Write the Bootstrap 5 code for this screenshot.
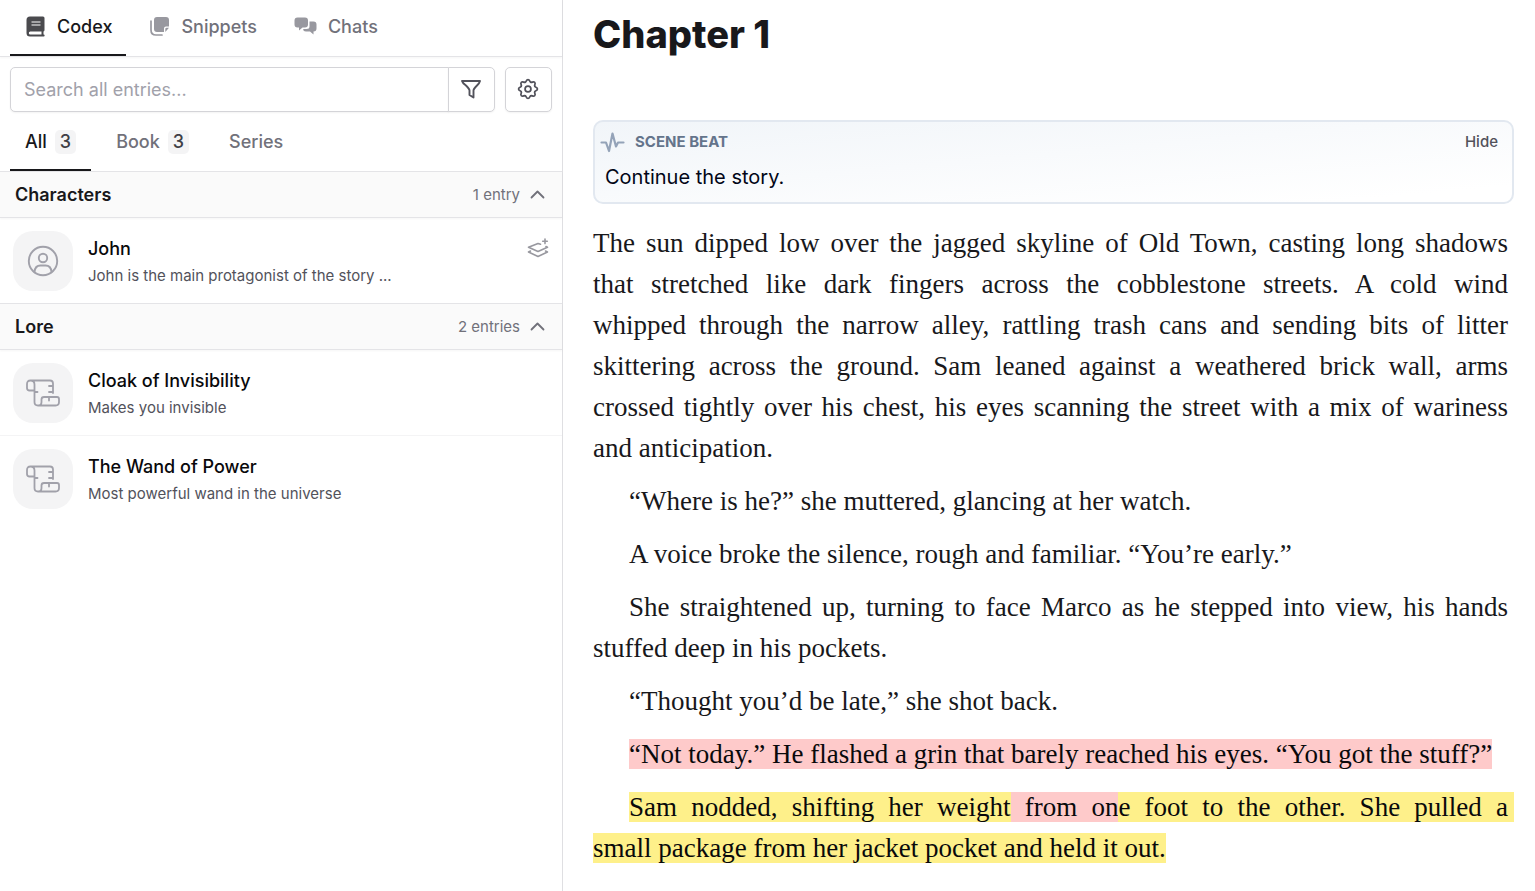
<!DOCTYPE html>
<html lang="en">
<head>
<meta charset="utf-8">
<meta name="viewport" content="width=device-width, initial-scale=1">
<title>Chapter 1</title>
<link href="https://cdn.jsdelivr.net/npm/bootstrap@5.3.0/dist/css/bootstrap.min.css" rel="stylesheet">
<style>
  body { font-family: Inter, "Liberation Sans", sans-serif; color: #18181b; }
  button { font-family: inherit; }
  svg { display: block; flex: none; }
  .line { fill: none; stroke: currentColor; stroke-linecap: round; stroke-linejoin: round; }
  .codex-pane { flex: 0 0 563px; max-width: 50vw; border-right: 1px solid #dfdfe2; }
  .tab-strip { padding: 0 10px; border-bottom: 1px solid #e4e4e7; }
  .tab-btn { border: 0; background: none; color: #71717a; font-weight: 500; font-size: 18px; line-height: 24px; border-bottom: 2px solid transparent; }
  .tab-btn.active { color: #18181b; border-bottom-color: #18181b; }
  .main-strip { height: 57px; gap: 8px; box-shadow: 0 1px 2px #0000000a; }
  .main-tab { padding: 14px 14px 15px 15px; gap: 11px; }
  .main-tab svg { color: #98989f; }
  .main-tab.active svg { color: #4a4a4e; }
  .sub-strip { height: 60px; gap: 10px; }
  .sub-tab { padding: 18px 15px 0; gap: 8px; height: 59px; align-items: flex-start; }
  .sub-tab .count { background: #f4f4f5; color: #3f3f46; border-radius: 5px; padding: 0 5px; }
  .tools { padding: 10px 10px 0; gap: 10px; }
  .tools .form-control, .tools .btn { height: 45px; border-color: #d4d4d8; box-shadow: 0 1px 2px #0000000d; }
  .tools .form-control { font-size: 18px; padding: 0 13px; border-radius: 5px; }
  .tools .form-control::placeholder { color: #a1a1aa; }
  .tools .btn { width: 47px; padding: 0 2px 2px 0; border-radius: 5px; color: #52525b; background: #fff; }
  .group-head { height: 46px; padding: 0 17px 0 15px; background: #fafafa; border-bottom: 1px solid #e4e4e7; box-shadow: 0 1px 2px #0000000a; font-size: 18px; }
  .group-head h2 { font-size: 18px; font-weight: 600; margin: 0; }
  .group-head button { border: 0; background: none; padding: 1px 0 0; font-size: 15px; color: #71717a; gap: 10px; }
  .group-head svg { margin-bottom: 2px; }
  .entry { padding: 13px; gap: 15px; border-bottom: 1px solid #f4f4f5; height: 86px; }
  .entry.final { border-color: #e4e4e7; }
  .entry.open-end { border-color: transparent; }
  .entry h3 { font-size: 18px; line-height: 26px; font-weight: 500; margin: 5px 0 2px; color: #09090b; }
  .entry p { font-size: 15px; line-height: 24px; margin: 0; color: #52525b; }
  .thumb { width: 60px; height: 60px; border-radius: 20px; background: #f4f4f5; color: #a1a1aa; }
  .stack-icon { color: #98989f; margin-top: 7px; }
  .editor { padding: 6px 21px 0 30px; min-width: 0; }
  .editor h1 { font-size: 38px; line-height: 56px; font-weight: 800; margin: 0 0 58px; color: #18181b; }
  .beat { height: 84px; border: 2px solid #e2e8f0; border-radius: 10px; padding: 8px 14px 0 5px; background: linear-gradient(to bottom right, #f1f5f9, #fff 90%); }
  .beat .beat-name { color: #64748b; font-size: 15px; font-weight: 700; margin-left: 10px; }
  .beat button { border: 0; background: none; padding: 0; font-size: 15px; font-weight: 500; color: #52525b; }
  .beat p { font-size: 20px; line-height: 28px; margin: 9px 0 0 5px; color: #020617; }
  .prose { font-family: "Liberation Serif", serif; font-size: 27px; line-height: 41px; padding-right: 6px; margin-top: 19px; text-align: justify; color: #18181b; }
  .prose p { margin: 0 0 12px; text-indent: 36px; }
  /* typeset lines: "full" runs to both margins, "tail" ends the paragraph */
  .full, .tail { display: block; text-indent: 0; }
  .full { text-align-last: justify; }
  .full.indented { text-indent: 36px; }
  .rose { background: #fecaca; color: #09090b; }
  .gold { background: #fef08a; color: #09090b; }
  .full .gold:last-child { padding-right: 6px; margin-right: -6px; }
</style>
</head>
<body>
<svg width="0" height="0" class="position-absolute" aria-hidden="true">
  <defs>
    <path id="tooth" d="M-3.060-7.390C-1.500-7.500-2.300-10.300 0-10.300S1.500-7.500 3.060-7.390"/>
    <path id="scroll" d="M8.500 11.500H3.500Q1 11.500 1 9V5q0-3.500 3.500-3.500H24q3 0 3 3V14M4.500 1.500q4 0 4 4V23q0 3.500 3.500 3.500M8.500 13h3M23 7h4M23 13h4M12 26.500q3.500 0 3.500-3.500v-2.500q0-2.500 2.500-2.500h13q2 0 2 2v3q0 3.500-3.500 3.500Zm11-8.500v3.500"/>
  </defs>
</svg>
<div class="d-flex vh-100 overflow-hidden">
  <aside class="codex-pane d-flex flex-column">
    <nav class="tab-strip main-strip d-flex">
      <button class="tab-btn main-tab active d-flex align-items-center">
        <svg width="21" height="21" viewBox="0 0 21 21"><path fill="currentColor" fill-rule="evenodd" d="M5 0.500h13q1.500 0 1.500 1.500v12q0 1-1 1.500v3h.2a.9.9 0 0 1 0 1.900H5a3.500 3.500 0 0 1-3.500-3.500V4A3.500 3.500 0 0 1 5 .5Zm.3 14.900a1.500 1.500 0 0 0 0 3h11.200v-3ZM6.500 5.400v1.200h9V5.400Zm0 3v1.200h9V8.400Z"/></svg>
        Codex</button>
      <button class="tab-btn main-tab d-flex align-items-center">
        <svg width="21" height="21" viewBox="0 0 21 21"><path fill="currentColor" d="M8 1h9q3 0 3 3v6.500h-3a2 2 0 0 0-2 2V16H8q-3 0-3-3V4q0-3 3-3Zm8.300 15v-3q0-1.200 1.200-1.200H20Z"/><path class="line" stroke-width="1.700" d="M2 5v9q0 5 5 5h6"/></svg>
        Snippets</button>
      <button class="tab-btn main-tab d-flex align-items-center">
        <svg width="23" height="21" viewBox="0 0 23 21"><path fill="currentColor" d="M3.500 1.500H11q3 0 3 3v4q0 3-3 3H8.500L5 14.500v-3H3.500q-3 0-3-3v-4q0-3 3-3Zm12 4H19.500q3 0 3 3v4q0 3-3 3V18.500l-3.500-3h-4q-2.800 0-2.800-2.500H12.500q3 0 3-2.500Z"/></svg>
        Chats</button>
    </nav>
    <div class="tools d-flex">
      <div class="input-group flex-nowrap">
        <input type="search" class="form-control" placeholder="Search all entries..." aria-label="Search all entries">
        <button class="btn d-flex align-items-center justify-content-center" aria-label="Filter"><svg width="22" height="22" viewBox="0 0 22 22"><path class="line" stroke-width="1.900" d="M2 3h18q-.5 2-3 4.500-3.500 3.500-3.500 5V19.500l-4-2.500v-4.500q0-1.500-3.500-5Q2.500 5 2 3Z"/></svg></button>
      </div>
      <button class="btn flex-shrink-0 d-flex align-items-center justify-content-center" aria-label="Settings">
        <svg width="22" height="22" viewBox="-12 -12 24 24"><g class="line" stroke-width="1.900"><use href="#tooth"/><use href="#tooth" transform="rotate(45)"/><use href="#tooth" transform="rotate(90)"/><use href="#tooth" transform="rotate(135)"/><use href="#tooth" transform="rotate(180)"/><use href="#tooth" transform="rotate(225)"/><use href="#tooth" transform="rotate(270)"/><use href="#tooth" transform="rotate(315)"/><circle r="3.200"/></g></svg>
      </button>
    </div>
    <nav class="tab-strip sub-strip d-flex">
      <button class="tab-btn sub-tab active d-flex">All <span class="count">3</span></button>
      <button class="tab-btn sub-tab d-flex">Book <span class="count">3</span></button>
      <button class="tab-btn sub-tab d-flex">Series</button>
    </nav>
    <section>
      <div class="group-head d-flex justify-content-between align-items-center">
        <h2>Characters</h2>
        <button class="d-flex align-items-center">1 entry <svg width="15" height="15" viewBox="0 0 15 15"><path class="line" stroke-width="1.800" d="M1.500 10.500l6-6 6 6"/></svg></button>
      </div>
      <article class="entry final d-flex">
        <div class="thumb d-flex align-items-center justify-content-center"><svg width="32" height="32" viewBox="0 0 32 32"><g class="line" stroke-width="1.900"><circle cx="16" cy="16" r="14.200"/><circle cx="16" cy="13" r="4.200"/><path d="M7.500 27q.5-6.500 6-6.500h5q5.500 0 6 6.500"/></g></svg></div>
        <div class="flex-grow-1"><h3>John</h3><p>John is the main protagonist of the story ...</p></div>
        <svg width="22" height="22" viewBox="0 0 22 22" class="stack-icon"><g class="line" stroke-width="1.600"><path d="M18 1v4.600M15.700 3.300h4.600M13.500 6.300 11 5.500 1.500 9.300 11 13.500l9.500-4.200-1.500-.8M3.500 13l-2 1 9.500 4.500 9.500-4.500-2-1"/></g></svg>
      </article>
    </section>
    <section>
      <div class="group-head d-flex justify-content-between align-items-center">
        <h2>Lore</h2>
        <button class="d-flex align-items-center">2 entries <svg width="15" height="15" viewBox="0 0 15 15"><path class="line" stroke-width="1.800" d="M1.500 10.500l6-6 6 6"/></svg></button>
      </div>
      <article class="entry d-flex">
        <div class="thumb d-flex align-items-center justify-content-center"><svg width="34" height="28" viewBox="0 0 34 28"><use href="#scroll" class="line" stroke-width="1.800"/></svg></div>
        <div class="flex-grow-1"><h3>Cloak of Invisibility</h3><p>Makes you invisible</p></div>
      </article>
      <article class="entry open-end d-flex">
        <div class="thumb d-flex align-items-center justify-content-center"><svg width="34" height="28" viewBox="0 0 34 28"><use href="#scroll" class="line" stroke-width="1.800"/></svg></div>
        <div class="flex-grow-1"><h3>The Wand of Power</h3><p>Most powerful wand in the universe</p></div>
      </article>
    </section>
  </aside>
  <main class="editor flex-grow-1">
    <h1>Chapter 1</h1>
    <section class="beat">
      <div class="d-flex align-items-center">
        <svg width="25" height="24" viewBox="0 0 25 24" color="#94a3b8"><path class="line" stroke-width="2.200" d="M1.500 12.500H6l3 8.500L12.500 3.500l3.500 13 2-4h5.500"/></svg>
        <span class="beat-name flex-grow-1">SCENE BEAT</span>
        <button>Hide</button>
      </div>
      <p>Continue the story.</p>
    </section>
    <div class="prose">
      <p>
        <span class="full">The sun dipped low over the jagged skyline of Old Town, casting long shadows</span>
        <span class="full">that stretched like dark fingers across the cobblestone streets. A cold wind</span>
        <span class="full">whipped through the narrow alley, rattling trash cans and sending bits of litter</span>
        <span class="full">skittering across the ground. Sam leaned against a weathered brick wall, arms</span>
        <span class="full">crossed tightly over his chest, his eyes scanning the street with a mix of wariness</span>
        <span class="tail">and anticipation.</span>
      </p>
      <p>“Where is he?” she muttered, glancing at her watch.</p>
      <p>A voice broke the silence, rough and familiar. “You’re early.”</p>
      <p>
        <span class="full indented">She straightened up, turning to face Marco as he stepped into view, his hands</span>
        <span class="tail">stuffed deep in his pockets.</span>
      </p>
      <p>“Thought you’d be late,” she shot back.</p>
      <p><span class="rose">“Not today.” He flashed a grin that barely reached his eyes. “You got the stuff?”</span></p>
      <p>
        <span class="full indented"><span class="gold">Sam nodded, shifting her weight</span><span class="rose"> from on</span><span class="gold">e foot to the other. She pulled a</span></span>
        <span class="tail"><span class="gold">small package from her jacket pocket and held it out.</span></span>
      </p>
      <p>Marco reached down, his eyes locked on the package. “Let’s keep it quick.”</p>
    </div>
  </main>
</div>
<script src="https://cdn.jsdelivr.net/npm/bootstrap@5.3.0/dist/js/bootstrap.bundle.min.js"></script>
</body>
</html>
